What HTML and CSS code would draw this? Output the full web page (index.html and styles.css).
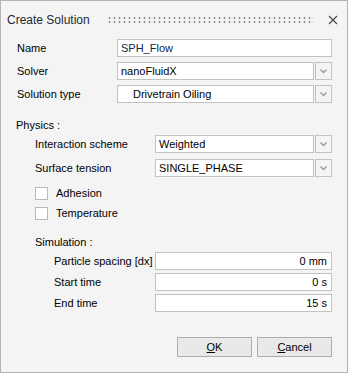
FILE: index.html
```html
<!DOCTYPE html>
<html>
<head>
<meta charset="utf-8">
<link rel="stylesheet" href="styles.css">
</head>
<body>
<div class="dialog">
  <div class="titlebar">
    <span class="title">Create Solution</span>
    <span class="grip"></span>
    <svg class="close" width="10" height="10" viewBox="0 0 10 10"><path d="M1 1L9 9M9 1L1 9" stroke="#444" stroke-width="1.1" fill="none"/></svg>
  </div>
  <div class="top">
    <div class="row"><span class="lbl">Name</span><div class="field text">SPH_Flow</div></div>
    <div class="row"><span class="lbl">Solver</span><div class="combo"><div class="field">nanoFluidX</div><div class="arrow"><svg width="7" height="5" viewBox="0 0 7 5"><path d="M0.5 0.5L3.5 3.5L6.5 0.5" stroke="#999" stroke-width="1.4" fill="none"/></svg></div></div></div>
    <div class="row"><span class="lbl">Solution type</span><div class="combo"><div class="field indent">Drivetrain Oiling</div><div class="arrow"><svg width="7" height="5" viewBox="0 0 7 5"><path d="M0.5 0.5L3.5 3.5L6.5 0.5" stroke="#999" stroke-width="1.4" fill="none"/></svg></div></div></div>
  </div>
  <div class="section physics">
    <div class="heading">Physics :</div>
    <div class="rows">
      <div class="row wide"><span class="lbl">Interaction scheme</span><div class="combo"><div class="field">Weighted</div><div class="arrow"><svg width="7" height="5" viewBox="0 0 7 5"><path d="M0.5 0.5L3.5 3.5L6.5 0.5" stroke="#999" stroke-width="1.4" fill="none"/></svg></div></div></div>
      <div class="row wide"><span class="lbl">Surface tension</span><div class="combo"><div class="field">SINGLE_PHASE</div><div class="arrow"><svg width="7" height="5" viewBox="0 0 7 5"><path d="M0.5 0.5L3.5 3.5L6.5 0.5" stroke="#999" stroke-width="1.4" fill="none"/></svg></div></div></div>
      <label class="check first"><span class="box"></span>Adhesion</label>
      <label class="check"><span class="box"></span>Temperature</label>
    </div>
  </div>
  <div class="section sim">
    <div class="heading">Simulation :</div>
    <div class="rows">
      <div class="row sim-row"><span class="lbl">Particle spacing [dx]</span><div class="field num">0 mm</div></div>
      <div class="row sim-row"><span class="lbl">Start time</span><div class="field num">0 s</div></div>
      <div class="row sim-row"><span class="lbl">End time</span><div class="field num">15 s</div></div>
    </div>
  </div>
  <div class="buttons">
    <button class="btn"><u>O</u>K</button>
    <button class="btn"><u>C</u>ancel</button>
  </div>
</div>
</body>
</html>
```
FILE: styles.css
```css
* { box-sizing: border-box; }
html, body { margin: 0; padding: 0; }
body {
  font-family: "Liberation Sans", Arial, sans-serif;
  font-size: 11px;
  color: #000;
  background: #f4f4f4;
}
.dialog {
  width: 348px;
  height: 373px;
  border: 1px solid #b4b4b4;
  background: #f4f4f4;
  display: flex;
  flex-direction: column;
}
.titlebar {
  height: 37px;
  display: flex;
  align-items: center;
  padding: 0 9px 0 6px;
}
.title {
  font-size: 12px;
  color: #1e2a3a;
}
.grip {
  flex: 1;
  height: 8px;
  margin: 0 14px 0 17px;
  background-image: radial-gradient(circle, #888 0.8px, transparent 1.2px);
  background-size: 5px 4px;
  background-position: 0 0;
}
.close { display: block; }
.top {
  display: flex;
  flex-direction: column;
  gap: 5px;
  padding: 1px 15px 0 16px;
}
.row {
  display: flex;
  align-items: center;
  height: 18px;
}
.lbl {
  flex: none;
  width: 100px;
  white-space: nowrap;
}
.field {
  flex: 1;
  height: 18px;
  background: #fff;
  border: 1px solid #c2c2c2;
  padding: 0 3px;
  line-height: 16px;
  white-space: nowrap;
}
.field.text { color: #14254a; }
.field.indent { padding-left: 15px; }
.combo {
  flex: 1;
  display: flex;
  gap: 1px;
  height: 18px;
}
.arrow {
  flex: none;
  width: 17px;
  height: 18px;
  border: 1px solid #c2c2c2;
  background: #f4f4f4;
  display: flex;
  align-items: center;
  justify-content: center;
}
.arrow svg { display: block; }
.section {
  display: flex;
  flex-direction: column;
}
.physics { padding: 15px 15px 0 15px; }
.heading { height: 14px; line-height: 14px; }
.physics .rows {
  display: flex;
  flex-direction: column;
  gap: 6px;
  padding: 3px 0 0 19px;
}
.row.wide .lbl { width: 120px; }
.check {
  display: flex;
  align-items: center;
  height: 14px;
  gap: 8px;
}
.check.first { margin-top: 3px; }
.box {
  width: 13px;
  height: 13px;
  border: 1px solid #b8b8b8;
  background: #fff;
}
.sim { padding: 15px 15px 0 34px; }
.sim .rows {
  display: flex;
  flex-direction: column;
  gap: 3px;
  padding: 3px 0 0 19px;
}
.row.sim-row .lbl { width: 101px; }
.field.num { text-align: right; padding-right: 4px; }
.buttons {
  display: flex;
  justify-content: flex-end;
  gap: 5px;
  padding: 25px 15px 0 0;
}
.btn {
  width: 75px;
  height: 20px;
  border: 1px solid #adadad;
  background: #e9e9e9;
  font-family: inherit;
  font-size: 11px;
  color: #000;
  padding: 0;
}
```
